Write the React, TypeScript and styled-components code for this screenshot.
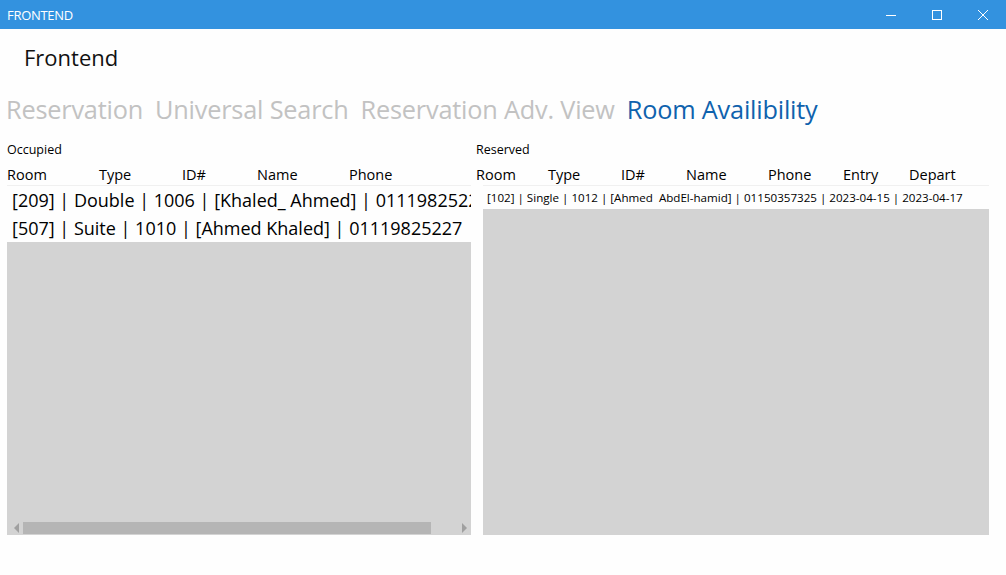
import * as React from 'react'
import styled, { createGlobalStyle } from 'styled-components'

const GlobalStyle = createGlobalStyle`
  html, body {
    margin: 0;
    padding: 0;
    background: #fefefe;
  }
  body {
    font-family: "Segoe UI", "Open Sans", "Noto Sans", sans-serif;
    color: #000;
    width: 1006px;
    height: 575px;
    overflow: hidden;
  }
`

const Window = styled.div`
  width: 1006px;
  height: 575px;
  display: flex;
  flex-direction: column;
`

const TitleBar = styled.div`
  height: 29px;
  flex: none;
  background: #3392df;
  display: flex;
  align-items: center;
  padding-left: 7px;
  color: #fff;
  font-size: 13px;
`

const TitleText = styled.span`
  flex: 1;
  letter-spacing: -0.3px;
`

const Controls = styled.div`
  display: flex;
  height: 100%;
`

const ControlButton = styled.div`
  width: 46px;
  height: 100%;
  display: flex;
  align-items: center;
  justify-content: center;
`

const AppTitle = styled.div`
  height: 55px;
  display: flex;
  align-items: center;
  padding-left: 24px;
  font-size: 22px;
  color: #111;
`

const Tabs = styled.div`
  height: 44px;
  margin-top: 3px;
  display: flex;
  align-items: center;
  gap: 12px;
  padding-left: 6px;
`

const Tab = styled.span<{ $active?: boolean }>`
  font-size: 25.3px;
  color: ${p => (p.$active ? '#0f62ad' : '#c2c2c2')};
  white-space: nowrap;
  letter-spacing: -0.2px;
`

const Panels = styled.div`
  display: grid;
  grid-template-columns: 464px 513px;
  column-gap: 5px;
  padding-left: 7px;
  margin-top: 10px;
`

const Panel = styled.div`
  display: flex;
  flex-direction: column;
`

const SectionLabel = styled.div`
  height: 18px;
  line-height: 18px;
  font-size: 12.5px;
  margin-bottom: 6px;
`

const HeaderRow = styled.div<{ $cols: string }>`
  display: grid;
  grid-template-columns: ${p => p.$cols};
  height: 20px;
  line-height: 20px;
  font-size: 14.5px;
  white-space: nowrap;
`

const ListBox = styled.div<{ $inset?: number }>`
  height: 349px;
  margin-left: ${p => p.$inset || 0}px;
  background: #d3d3d3;
  border-top: 1px solid #f0f0f0;
  display: flex;
  flex-direction: column;
  overflow: hidden;
`

const Row = styled.div<{ $size: number; $height: number }>`
  background: #fefefe;
  height: ${p => p.$height}px;
  line-height: ${p => p.$height}px;
  font-size: ${p => p.$size}px;
  padding-left: ${p => (p.$size > 16 ? 5 : 4)}px;
  white-space: pre;
  overflow: hidden;
  flex: none;
`

const Filler = styled.div`
  flex: 1;
`

const ScrollBar = styled.div`
  height: 13px;
  margin-bottom: 1px;
  display: flex;
  align-items: center;
  padding-left: 3px;
`

const Arrow = styled.span<{ $dir: 'left' | 'right' }>`
  width: 0;
  height: 0;
  border-top: 5px solid transparent;
  border-bottom: 5px solid transparent;
  ${p => (p.$dir === 'left' ? 'border-right: 5px solid #a0a0a0;' : 'border-left: 5px solid #a0a0a0;')}
  margin: 0 4px;
`

const Thumb = styled.div`
  width: 408px;
  height: 12px;
  background: #b5b5b5;
`

const Track = styled.div`
  flex: 1;
`

const occupiedCols = '92px 83px 75px 92px 1fr'
const reservedCols = '72px 73px 65px 82px 75px 66px 1fr'

const occupied = [
    '[209] | Double | 1006 | [Khaled_ Ahmed] | 01119825227',
    '[507] | Suite | 1010 | [Ahmed Khaled] | 01119825227',
]

const reserved = [
    '[102] | Single | 1012 | [Ahmed  AbdEl-hamid] | 01150357325 | 2023-04-15 | 2023-04-17',
]

export default function App() {
    return (
        <Window>
            <GlobalStyle/>
            <TitleBar>
                <TitleText>FRONTEND</TitleText>
                <Controls>
                    <ControlButton>
                        <svg width="10" height="10" viewBox="0 0 10 10">
                            <path d="M0 5.5h10" stroke="#fff" strokeWidth="1"/>
                        </svg>
                    </ControlButton>
                    <ControlButton>
                        <svg width="10" height="10" viewBox="0 0 10 10">
                            <rect x="0.5" y="0.5" width="9" height="9" fill="none" stroke="#fff" strokeWidth="1"/>
                        </svg>
                    </ControlButton>
                    <ControlButton>
                        <svg width="10" height="10" viewBox="0 0 10 10">
                            <path d="M0 0L10 10M10 0L0 10" stroke="#fff" strokeWidth="1"/>
                        </svg>
                    </ControlButton>
                </Controls>
            </TitleBar>

            <AppTitle>Frontend</AppTitle>

            <Tabs>
                <Tab>Reservation</Tab>
                <Tab>Universal Search</Tab>
                <Tab>Reservation Adv. View</Tab>
                <Tab $active>Room Availibility</Tab>
            </Tabs>

            <Panels>
                <Panel>
                    <SectionLabel>Occupied</SectionLabel>
                    <HeaderRow $cols={occupiedCols}>
                        <span>Room</span>
                        <span>Type</span>
                        <span>ID#</span>
                        <span>Name</span>
                        <span>Phone</span>
                    </HeaderRow>
                    <ListBox>
                        {occupied.map(r => <Row key={r} $size={18} $height={28}>{r}</Row>)}
                        <Filler/>
                        <ScrollBar>
                            <Arrow $dir="left"/>
                            <Thumb/>
                            <Track/>
                            <Arrow $dir="right"/>
                        </ScrollBar>
                    </ListBox>
                </Panel>
                <Panel>
                    <SectionLabel>Reserved</SectionLabel>
                    <HeaderRow $cols={reservedCols}>
                        <span>Room</span>
                        <span>Type</span>
                        <span>ID#</span>
                        <span>Name</span>
                        <span>Phone</span>
                        <span>Entry</span>
                        <span>Depart</span>
                    </HeaderRow>
                    <ListBox $inset={7}>
                        {reserved.map(r => <Row key={r} $size={11.6} $height={23}>{r}</Row>)}
                        <Filler/>
                    </ListBox>
                </Panel>
            </Panels>
        </Window>
    )
}
